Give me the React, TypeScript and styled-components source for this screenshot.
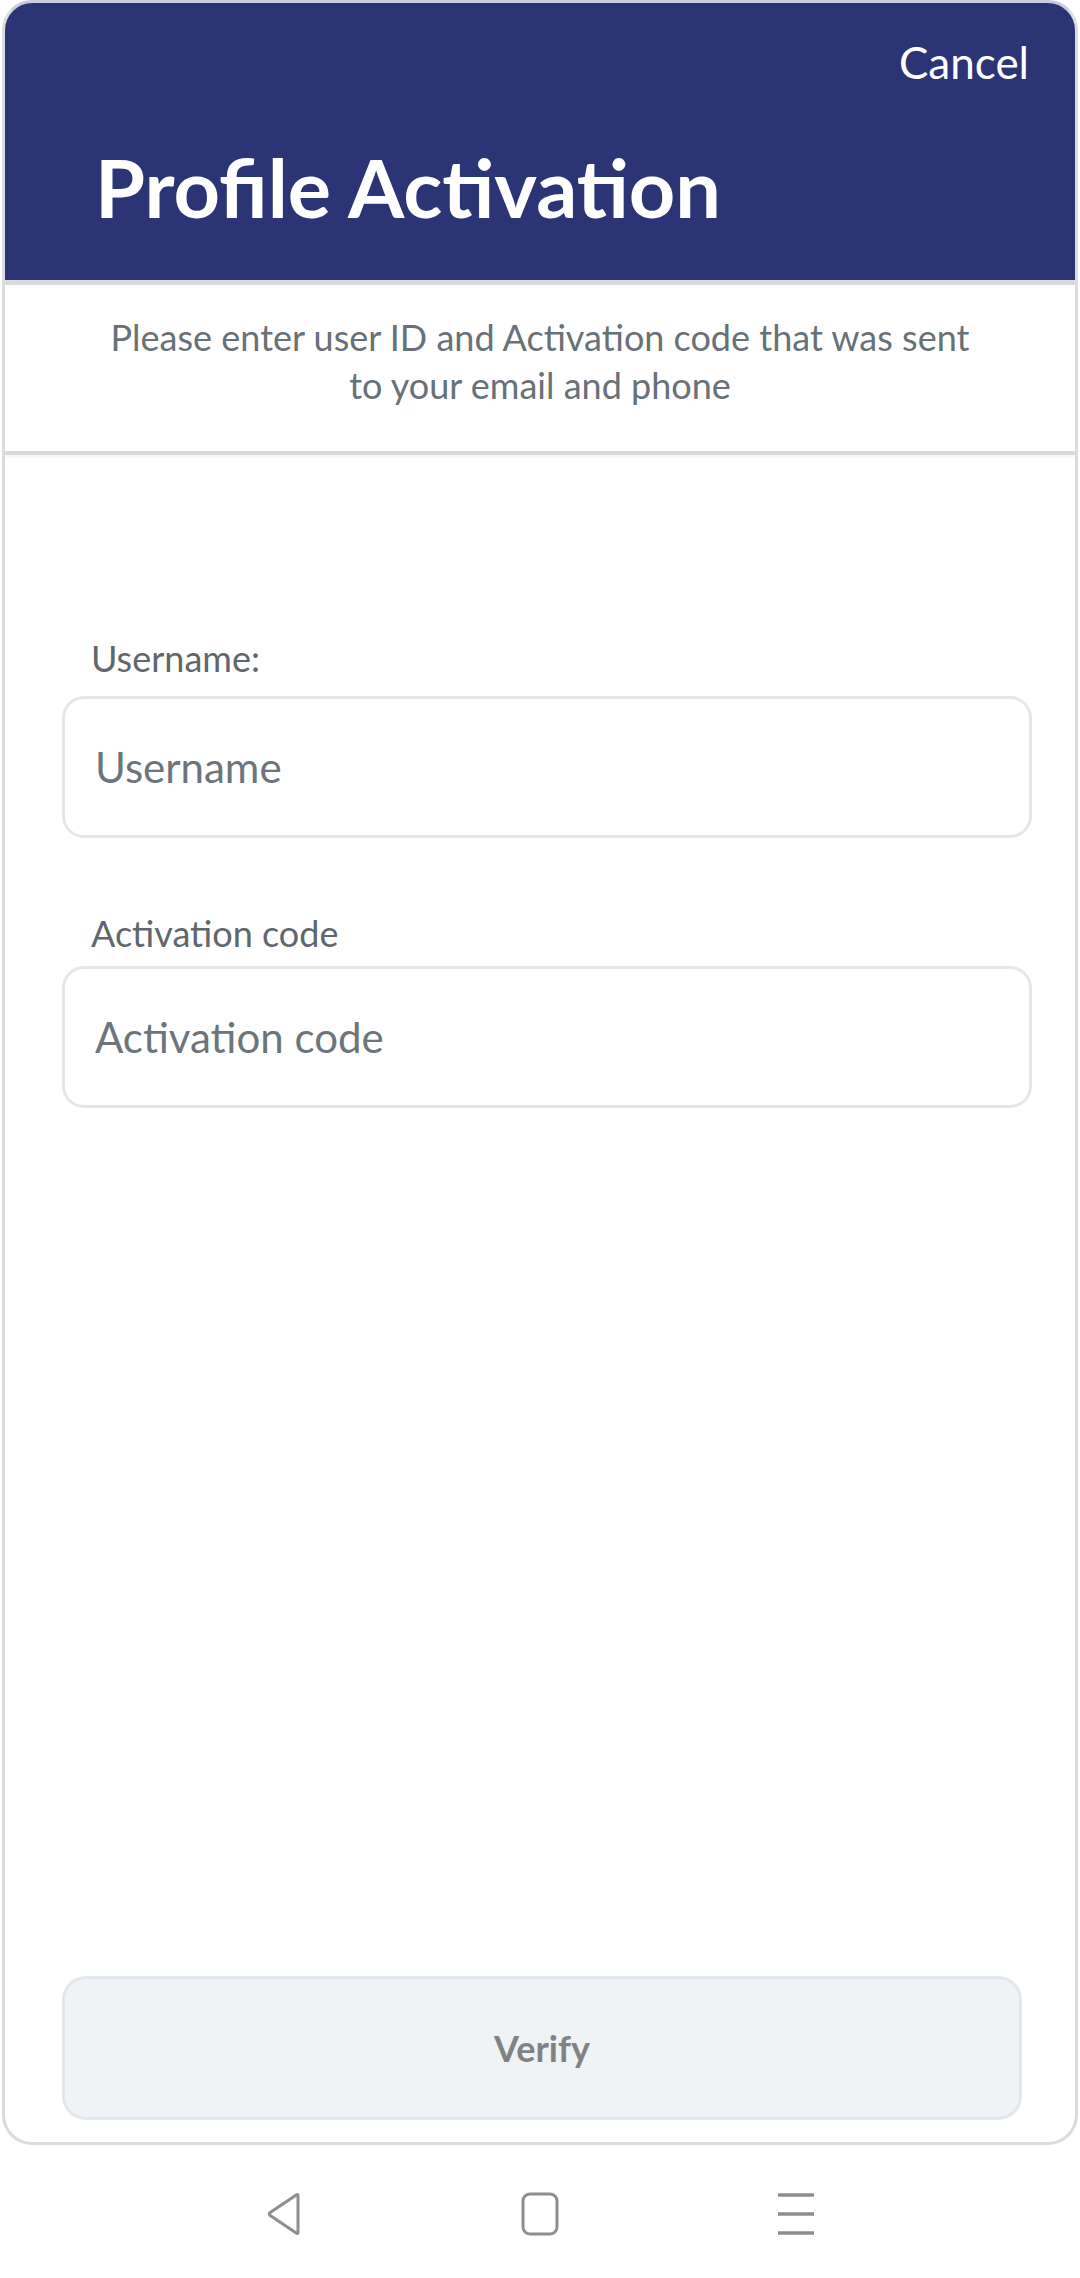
import React from "react";
import styled, { createGlobalStyle } from "styled-components";

const Global = createGlobalStyle`
  html, body { margin: 0; padding: 0; background: #ffffff; }
  * { box-sizing: border-box; }
  body { font-family: "Lato", "Noto Sans", sans-serif; }
`;

const Screen = styled.div`
  width: 1080px;
  height: 2278px;
  display: flex;
  flex-direction: column;
  background: #ffffff;
`;

const Card = styled.div`
  margin: 0 2px;
  height: 2145px;
  border: 3px solid #dcdce0;
  border-top-color: #c9cbe0;
  border-radius: 30px;
  overflow: hidden;
  display: flex;
  flex-direction: column;
  background: #ffffff;
`;

const Header = styled.header`
  height: 282px;
  flex-shrink: 0;
  background: #2b3475;
  display: flex;
  flex-direction: column;
  padding: 34px 46px 0 90px;
  border-bottom: 5px solid #d9dadd;
`;

const CancelButton = styled.button`
  align-self: flex-end;
  background: none;
  border: none;
  padding: 0;
  color: #ffffff;
  font-family: inherit;
  font-size: 44px;
  line-height: 50px;
  cursor: pointer;
`;

const Title = styled.h1`
  margin: 52px 0 0 0;
  color: #ffffff;
  font-size: 81px;
  line-height: 96px;
  font-weight: 700;
`;

const Intro = styled.section`
  height: 170px;
  flex-shrink: 0;
  display: flex;
  align-items: center;
  justify-content: center;
  padding: 0 90px 14px;
  border-bottom: 4px solid #d9dadd;
  box-shadow: 0 2px 3px rgba(0, 0, 0, 0.05);
`;

const IntroText = styled.p`
  margin: 0;
  text-align: center;
  color: #687177;
  font-size: 36px;
  line-height: 48px;
`;

const Form = styled.form`
  flex: 1;
  display: flex;
  flex-direction: column;
  padding: 183px 45px 22px 57px;
`;

const Field = styled.div<{ $gap: number }>`
  display: flex;
  flex-direction: column;
  margin-bottom: ${(p) => p.$gap}px;
`;

const Label = styled.label<{ $space: number }>`
  color: #5f676d;
  font-size: 36px;
  line-height: 40px;
  padding-left: 29px;
  margin-bottom: ${(p) => p.$space}px;
`;

const Input = styled.input`
  width: 970px;
  height: 142px;
  border: 3px solid #e3e7eb;
  border-radius: 22px;
  padding: 0 30px;
  font-family: inherit;
  font-size: 42px;
  color: #333;
  background: #fff;
  outline: none;
  &::placeholder { color: #6c757c; }
`;

const Spacer = styled.div`
  flex: 1;
`;

const VerifyButton = styled.button`
  width: 960px;
  height: 144px;
  border: 3px solid #e3e7eb;
  border-radius: 24px;
  background: #f0f3f6;
  color: #808284;
  font-family: inherit;
  font-size: 36px;
  font-weight: 700;
  cursor: default;
`;

const NavBar = styled.nav`
  flex: 1;
  display: flex;
  align-items: center;
  justify-content: center;
  padding-top: 4px;
`;

const NavSlot = styled.div`
  width: 256px;
  display: flex;
  justify-content: center;
`;

export default function App() {
  return (
    <>
      <Global />
      <Screen>
        <Card>
          <Header>
            <CancelButton type="button">Cancel</CancelButton>
            <Title>Profile Activation</Title>
          </Header>
          <Intro>
            <IntroText>
              Please enter user ID and Activation code that was sent
              <br />
              to your email and phone
            </IntroText>
          </Intro>
          <Form onSubmit={(e) => e.preventDefault()}>
            <Field $gap={75}>
              <Label htmlFor="username" $space={18}>Username:</Label>
              <Input id="username" placeholder="Username" />
            </Field>
            <Field $gap={0}>
              <Label htmlFor="code" $space={13}>Activation code</Label>
              <Input id="code" placeholder="Activation code" />
            </Field>
            <Spacer />
            <VerifyButton type="submit" disabled>
              Verify
            </VerifyButton>
          </Form>
        </Card>
        <NavBar>
          <NavSlot>
            <svg width="36" height="44" viewBox="0 0 36 44" fill="none">
              <path
                d="M32 3.5 L32 40.5 Q32 42 30.6 41.2 L4.2 23.6 Q2.6 22 4.2 20.4 L30.6 2.8 Q32 2 32 3.5 Z"
                stroke="#8e8e8e"
                strokeWidth="3"
                strokeLinejoin="round"
              />
            </svg>
          </NavSlot>
          <NavSlot>
            <svg width="38" height="44" viewBox="0 0 38 44" fill="none">
              <rect x="2" y="2" width="34" height="40" rx="7" stroke="#8e8e8e" strokeWidth="3" />
            </svg>
          </NavSlot>
          <NavSlot>
            <svg width="38" height="44" viewBox="0 0 38 44" fill="none">
              <path d="M1 3 H37 M1 22 H37 M1 41 H37" stroke="#8e8e8e" strokeWidth="3.5" />
            </svg>
          </NavSlot>
        </NavBar>
      </Screen>
    </>
  );
}
